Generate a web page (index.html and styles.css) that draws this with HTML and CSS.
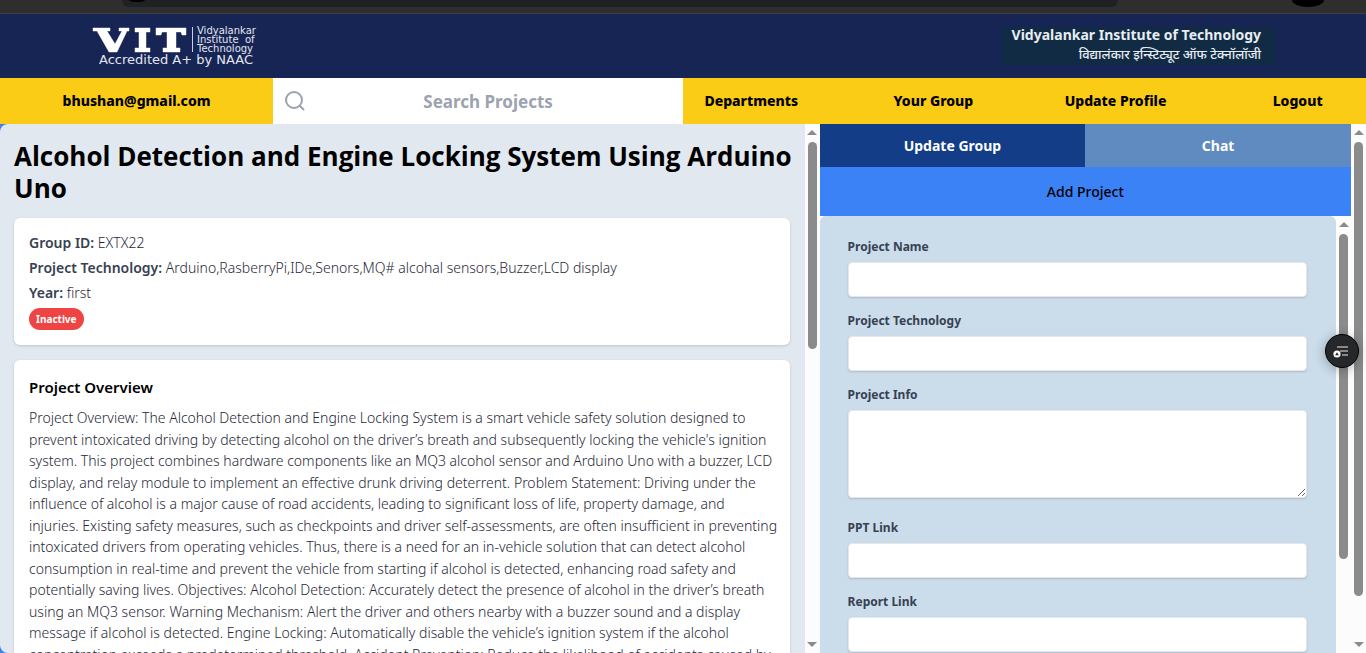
FILE: index.html
```html
<!DOCTYPE html>
<html lang="en">
<head>
<meta charset="utf-8">
<title>VIT Projects</title>
<meta name="viewport" content="width=device-width, initial-scale=1">
<link rel="stylesheet" href="styles.css">
</head>
<body>
<div class="browser-edge" aria-hidden="true">
  <div class="address-bar"><span class="dot"></span></div>
  <span class="dot dot-large"></span>
</div>

<header class="banner">
  <svg class="logo" viewBox="0 0 166 40" role="img" aria-label="VIT">
    <g class="logo-outline">
      <path d="M2 2H19V5H16L24 18L31 5H28V2H38V5H36L26 26H18L6 5H2Z"/>
      <path d="M44 2H59V6H55V22H59V26H44V22H48V6H44Z"/>
      <path d="M65 2H95V9H91L90 6H85V22H89V26H72V22H76V6H71L70 9H65Z"/>
    </g>
    <rect x="101" y="1" width="1" height="25" fill="#cbd0df"/>
    <g class="logo-small">
      <text x="106" y="8">Vidyalankar</text>
      <text x="106" y="17">Institute</text>
      <text x="154" y="17">of</text>
      <text x="106" y="26">Technology</text>
    </g>
    <text class="logo-tag" x="8" y="38">Accredited A+ by NAAC</text>
  </svg>
  <div class="institute">
    <span class="institute-en">Vidyalankar Institute of Technology</span>
    <span class="institute-hi" lang="hi">विद्यालंकार इन्स्टिट्यूट ऑफ टेक्नॉलॉजी</span>
  </div>
</header>

<nav class="navbar">
  <a class="account" href="#account">bhushan@gmail.com</a>
  <form class="search" role="search">
    <svg class="search-icon" viewBox="0 0 20 20" aria-hidden="true"><circle cx="9" cy="9" r="8"/><path d="M14.8 14.8L18.5 18.5"/></svg>
    <input class="search-input" type="text" placeholder="Search Projects" aria-label="Search Projects">
  </form>
  <div class="links">
    <a class="link" href="#departments">Departments</a>
    <a class="link" href="#group">Your Group</a>
    <a class="link" href="#profile">Update Profile</a>
    <a class="link" href="#logout">Logout</a>
  </div>
</nav>

<main class="workspace">
  <section class="left">
    <article class="project">
      <h1 class="title">Alcohol Detection and Engine Locking System Using Arduino Uno</h1>
      <div class="card">
        <p class="fact"><b>Group ID:</b> EXTX22</p>
        <p class="fact"><b>Project Technology:</b> Arduino,RasberryPi,IDe,Senors,MQ# alcohal sensors,Buzzer,LCD display</p>
        <p class="fact"><b>Year:</b> first</p>
        <span class="badge">Inactive</span>
      </div>
      <div class="card overview">
        <h2 class="subtitle">Project Overview</h2>
        <p class="body-text">Project Overview: The Alcohol Detection and Engine Locking System is a smart vehicle safety solution designed to prevent intoxicated driving by detecting alcohol on the driver’s breath and subsequently locking the vehicle's ignition system. This project combines hardware components like an MQ3 alcohol sensor and Arduino Uno with a buzzer, LCD display, and relay module to implement an effective drunk driving deterrent. Problem Statement: Driving under the influence of alcohol is a major cause of road accidents, leading to significant loss of life, property damage, and<br>injuries. Existing safety measures, such as checkpoints and driver self-assessments, are often insufficient in preventing intoxicated drivers from operating vehicles. Thus, there is a need for an in-vehicle solution that can detect alcohol<br>consumption in real-time and prevent the vehicle from starting if alcohol is detected, enhancing road safety and<br>potentially saving lives. Objectives: Alcohol Detection: Accurately detect the presence of alcohol in the driver’s breath using an MQ3 sensor. Warning Mechanism: Alert the driver and others nearby with a buzzer sound and a display message if alcohol is detected. Engine Locking: Automatically disable the vehicle’s ignition system if the alcohol<br>concentration exceeds a predetermined threshold. Accident Prevention: Reduce the likelihood of accidents caused by</p>
      </div>
    </article>
    <div class="scrollbar" aria-hidden="true"><i class="arrow-up"></i><div class="track"><div class="thumb" style="height:42%"></div></div><i class="arrow-down"></i></div>
  </section>

  <section class="right">
    <div class="tabs">
      <button class="tab tab-active" type="button">Update Group</button>
      <button class="tab" type="button">Chat</button>
    </div>
    <button class="add" type="button">Add Project</button>
    <div class="form-area">
      <form class="form">
        <label class="label" for="name">Project Name</label>
        <input class="field" id="name" type="text">
        <label class="label" for="tech">Project Technology</label>
        <input class="field" id="tech" type="text">
        <label class="label" for="info">Project Info</label>
        <textarea class="field field-tall" id="info"></textarea>
        <label class="label" for="ppt">PPT Link</label>
        <input class="field" id="ppt" type="text">
        <label class="label" for="report">Report Link</label>
        <input class="field" id="report" type="text">
      </form>
      <div class="scrollbar" aria-hidden="true"><i class="arrow-up"></i><div class="track"><div class="thumb" style="height:80%"></div></div></div>
    </div>
  </section>
  <div class="scrollbar" aria-hidden="true"><i class="arrow-up"></i><div class="track"><div class="thumb" style="height:92%"></div></div><i class="arrow-down"></i></div>
</main>

<button class="floating" type="button" aria-label="Open menu">
  <svg viewBox="0 0 32 32" aria-hidden="true">
    <path d="M11 12H22M14 16H22M16 20H22" stroke="#a9a9a9" stroke-width="1.6" fill="none"/>
    <circle cx="11" cy="19" r="3.6" fill="#fff"/>
    <path d="M9.2 20.3L11 17.2L12.8 20.3Z" fill="#222"/>
  </svg>
</button>
</body>
</html>
```
FILE: styles.css
```css
* { box-sizing: border-box; }

body {
  margin: 0;
  height: 100vh;
  display: flex;
  flex-direction: column;
  overflow: hidden;
  font-family: "Noto Sans", "Open Sans", sans-serif;
  font-size: 14px;
  color: #000;
}

h1, h2, p { margin: 0; }
a { color: inherit; text-decoration: none; }
button, input, textarea { font: inherit; border: 0; }

.browser-edge {
  flex: none;
  display: flex;
  align-items: flex-start;
  justify-content: space-between;
  height: 14px;
  padding: 0 42px 0 122px;
  background: #2e2e2e;
  border-bottom: 1px solid #404040;
  overflow: hidden;
}
.address-bar {
  flex: 1;
  max-width: 996px;
  height: 7px;
  padding-left: 7px;
  background: #202124;
  border-radius: 0 0 16px 16px;
}
.dot {
  display: block;
  width: 16px;
  height: 2px;
  background: #000;
  border-radius: 0 0 50% 50% / 0 0 100% 100%;
}
.dot-large { width: 32px; height: 7px; }

.banner {
  flex: none;
  display: flex;
  align-items: center;
  justify-content: space-between;
  height: 64px;
  padding: 0 91px;
  background: #172554;
}
.logo { width: 166px; height: 40px; fill: #fff; overflow: visible; }
.logo-outline path { stroke: #7d86a6; stroke-width: 1; paint-order: stroke; }
.logo text { font-family: "DejaVu Sans", sans-serif; fill: #e3e6ef; }
.logo-small { font-size: 10px; }
.logo-tag { font-size: 13px; }

.institute {
  display: flex;
  flex-direction: column;
  align-items: flex-end;
  width: 273px;
  height: 38px;
  padding-right: 14px;
  background: #112b45;
  color: #e8edf2;
}
.institute-en { font: 700 14px/16px "Noto Sans", sans-serif; white-space: nowrap; }
.institute-hi { font-size: 13px; font-weight: 500; line-height: 22px; white-space: nowrap; }

.navbar {
  flex: none;
  display: flex;
  height: 46px;
  background: #facc15;
  font-weight: 800;
}
.account {
  width: 20%;
  display: flex;
  align-items: center;
  justify-content: center;
}
.search {
  width: 30%;
  display: flex;
  align-items: center;
  padding: 0 12px;
  background: #fff;
}
.search-icon {
  flex: none;
  width: 20px;
  height: 20px;
  fill: none;
  stroke: #9ca3af;
  stroke-width: 2;
  stroke-linecap: round;
}
.search-input {
  flex: 1;
  min-width: 0;
  padding: 0;
  background: none;
  font-size: 17px;
  font-weight: 700;
  text-align: center;
}
.search-input::placeholder { color: #9ca3af; opacity: 1; }
.links {
  width: 50%;
  display: flex;
  align-items: center;
  justify-content: space-between;
}
.link { width: 20%; text-align: center; white-space: nowrap; }
.account, .link { padding-bottom: 2px; }

.workspace {
  flex: 1;
  min-height: 0;
  display: flex;
  background: #3b82f6;
}
.left { width: 60%; flex: none; display: flex; }
.project {
  flex: 1;
  min-width: 0;
  padding: 16px 15px 0 14px;
  overflow: hidden;
  background: #e2e8f0;
  border-radius: 8px 0 0 8px;
}
.title {
  margin: 0 -12px 14px 0;
  font-family: "Open Sans", "Noto Sans", sans-serif;
  font-size: 26px;
  font-weight: 700;
  line-height: 32px;
}
.card {
  padding: 14px 15px 15px;
  margin-bottom: 15px;
  background: #fff;
  border-radius: 6px;
  box-shadow: 0 1px 3px rgba(0, 0, 0, .15);
  color: #374151;
}
.overview { padding: 15px 10px 15px 15px; }
.fact { line-height: 22px; margin-bottom: 3px; font-weight: 300; color: #1f2937; }
.fact b { font-weight: 600; color: #374151; }
.badge {
  display: block;
  width: fit-content;
  margin-top: 4px;
  padding: 0 7px;
  border-radius: 11px;
  background: #ef4444;
  color: #fff;
  font-size: 10px;
  font-weight: 700;
  line-height: 22px;
}
.subtitle { font-size: 15px; font-weight: 600; line-height: 24px; margin-bottom: 8px; color: #000; }
.body-text { line-height: 1.54; font-weight: 300; color: #1f2937; }

.right { flex: 1; min-width: 0; display: flex; flex-direction: column; }
.tabs { flex: none; display: flex; height: 43px; }
.tab { flex: 1; background: #608bc1; color: #fff; font-weight: 700; }
.tab-active { background: #133e87; }
.add { flex: none; height: 49px; background: #3b82f6; font-weight: 500; }
.form-area { flex: 1; min-height: 0; display: flex; background: #fcfcfc; }
.form {
  flex: 1;
  min-width: 0;
  padding: 22px 29px 0 28px;
  overflow: hidden;
  background: #cbdceb;
  border-radius: 6px 6px 0 0;
}
.label {
  display: block;
  margin-bottom: 6px;
  font-size: 12px;
  line-height: 18px;
  font-weight: 700;
  color: #374151;
}
.field {
  display: block;
  width: 100%;
  height: 35px;
  margin-bottom: 15px;
  padding: 7px 10px;
  background: #fff;
  border: 1px solid #e5e7eb;
  border-radius: 4px;
  box-shadow: 0 1px 2px rgba(0, 0, 0, .15);
}
.field-tall { height: 88px; margin-bottom: 21px; resize: vertical; }

.scrollbar {
  flex: none;
  width: 15px;
  display: flex;
  flex-direction: column;
  align-items: center;
  padding: 6px 0;
  background: #fcfcfc;
}
.arrow-up, .arrow-down { border: 5px solid transparent; }
.arrow-up { border-top: 0; border-bottom-color: #8b8b8b; }
.arrow-down { border-bottom: 0; border-top-color: #8b8b8b; }
.track { flex: 1; width: 9px; margin: 7px 0; }
.thumb { background: #8b8b8b; border-radius: 5px; }

.floating {
  position: fixed;
  right: 7px;
  top: 334px;
  width: 34px;
  height: 34px;
  padding: 0;
  border-radius: 50%;
  background: #26272a;
  border: 1px solid #000;
  box-shadow: 0 2px 12px rgba(0, 0, 0, .3);
}
.floating svg { display: block; width: 32px; height: 32px; }
```
